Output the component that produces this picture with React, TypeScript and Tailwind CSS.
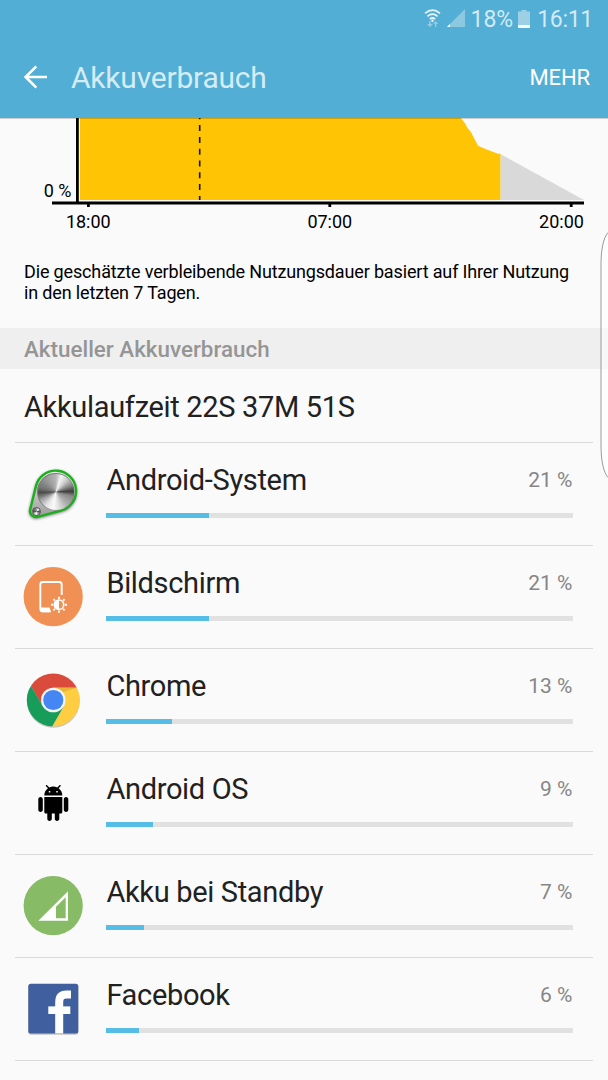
import React from "react";

interface UsageItem {
  name: string;
  percent: number;
  fill: number;
  icon: React.ReactElement;
}

const SystemIcon = () => (
  <div className="relative size-[60px]">
    <svg width="60" height="60" viewBox="0 0 60 60" overflow="visible">
      <defs>
        <filter id="soft" x="-20%" y="-20%" width="140%" height="140%">
          <feGaussianBlur stdDeviation="1.5" />
        </filter>
        <linearGradient id="plate" x1="0" y1="0" x2="0" y2="1">
          <stop offset="0" stopColor="#ececec" />
          <stop offset="1" stopColor="#9c9c9c" />
        </linearGradient>
      </defs>
      <path
        d="M13 23.1A20.3 20.3 0 1 1 37.9 47.6L14.5 53.8A6 6 0 0 1 7.2 46.5Z"
        fill="#555"
        stroke="#555"
        strokeWidth="2"
        filter="url(#soft)"
        opacity="0.8"
      />
      <path
        d="M13 22.1A20.3 20.3 0 1 1 37.9 46.6L14.5 52.8A6 6 0 0 1 7.2 45.5Z"
        fill="url(#plate)"
        stroke="#19b01b"
        strokeWidth="2.4"
      />
      <circle cx="32.7" cy="27.7" r="18.8" fill="#7c7c7c" />
    </svg>
    <div className="absolute left-[14.5px] top-[9.5px] size-[36px] rounded-full bg-[conic-gradient(#b5b5b5_0deg,#f4f4f4_18deg,#d0d0d0_40deg,#8c8c8c_65deg,#3e3e3e_88deg,#8a8a8a_105deg,#b0b0b0_140deg,#d8d8d8_165deg,#fafafa_190deg,#e4e4e4_215deg,#a8a8a8_240deg,#4c4c4c_268deg,#747474_285deg,#9a9a9a_325deg,#b5b5b5_360deg)]" />
    <div className="absolute left-[8.5px] top-[42.5px] size-[9px] rounded-full border border-[#555] bg-[conic-gradient(#999,#fff_40deg,#555_90deg,#aaa_140deg,#fff_200deg,#555_270deg,#999)]" />
  </div>
);

const DisplayIcon = () => (
  <svg width="60" height="60" viewBox="0 0 60 60">
    <circle cx="30.2" cy="29.7" r="29.6" fill="#f09054" />
    <g fill="none" stroke="#fff" strokeWidth="1.9">
      <path d="M38.7 28V17.5a2.5 2.5 0 0 0-2.5-2.5H19.8a2.5 2.5 0 0 0-2.5 2.5v24.3a2.5 2.5 0 0 0 2.5 2.5h7" />
      <circle cx="36" cy="37.7" r="4.7" strokeWidth="1.6" />
      <path d="M36 29.7v2.2M36 43.5v2.2M28 37.7h2.2M41.8 37.7h2.2M30.4 32.1l1.5 1.5M40.1 41.8l1.5 1.5M41.6 32.1l-1.5 1.5M31.9 41.8l-1.5 1.5" />
    </g>
    <path d="M17 40.6h9.4l1.8 4.6H19a2 2 0 0 1-2-2Z" fill="#fff" />
    <path d="M36 33a4.7 4.7 0 0 0 0 9.4Z" fill="#fff" />
  </svg>
);

const ChromeIcon = () => (
  <svg width="60" height="60" viewBox="0 0 60 60">
    <defs>
      <clipPath id="disc">
        <circle cx="0" cy="0" r="26.5" />
      </clipPath>
    </defs>
    <circle cx="30.3" cy="31.2" r="26.5" fill="#c4c4c4" />
    <g transform="translate(30.3 30)">
      <g clipPath="url(#disc)">
        <path d="M-27 -27H27V-12.3H0L-10.6 6.1L-22.3 -14L-30 -14Z" fill="#db4b3c" />
        <path d="M0 -12.3H30V30H-3.2L10.6 6.1Z" fill="#ffcd42" />
        <path d="M-22.3 -14L-10.6 6.1L0 12.3L10.6 6.1L-3.2 30H-30V-14Z" fill="#179c5a" />
        <path d="M0 -12.3H23L10 -8Z" fill="#d9a52e" opacity="0.6" />
      </g>
      <circle r="12.3" fill="#f4f4f4" />
      <circle r="10.1" fill="#4486f4" />
    </g>
  </svg>
);

const AndroidIcon = () => (
  <svg width="60" height="60" viewBox="0 0 60 60">
    <path
      transform="translate(12.3 12) scale(1.5)"
      d="M6 18c0 .55.45 1 1 1h1v3.5c0 .83.67 1.5 1.5 1.5s1.5-.67 1.5-1.5V19h2v3.5c0 .83.67 1.5 1.5 1.5s1.5-.67 1.5-1.5V19h1c.55 0 1-.45 1-1V8H6v10zM3.5 8C2.67 8 2 8.67 2 9.5v7c0 .83.67 1.5 1.5 1.5S5 17.33 5 16.5v-7C5 8.67 4.33 8 3.5 8zm17 0c-.83 0-1.5.67-1.5 1.5v7c0 .83.67 1.5 1.5 1.5s1.5-.67 1.5-1.5v-7c0-.83-.67-1.5-1.5-1.5zm-4.97-5.84l1.3-1.3c.2-.2.2-.51 0-.71-.2-.2-.51-.2-.71 0l-1.48 1.48C13.85 1.23 12.95 1 12 1c-.96 0-1.86.23-2.66.63L7.85.15c-.2-.2-.51-.2-.71 0-.2.2-.2.51 0 .71l1.31 1.31C6.97 3.26 6 5.01 6 7h12c0-1.99-.97-3.75-2.47-4.84zM10 5H9V4h1v1zm5 0h-1V4h1v1z"
    />
  </svg>
);

const StandbyIcon = () => (
  <svg width="60" height="60" viewBox="0 0 60 60">
    <circle cx="30.2" cy="29.7" r="29.6" fill="#87bb66" />
    <path
      fillRule="evenodd"
      fill="#fff"
      d="M15.3 44.7L45 15.3V44.7ZM33 30.7V42.3H42.7V21.3Z"
    />
  </svg>
);

const FacebookIcon = () => (
  <svg width="60" height="60" viewBox="0 0 60 60">
    <rect x="5.3" y="5.7" width="50" height="50" rx="2.5" fill="#c4c4c4" />
    <rect x="5.3" y="4.8" width="50" height="49.7" rx="2.5" fill="#405f9f" />
    <g fill="none" stroke="#fff">
      <path d="M36.2 54.4V23.2Q36.2 15.5 43.5 15.5H48" strokeWidth="8" />
      <path d="M25.3 31.2H47.3" strokeWidth="7.6" />
    </g>
  </svg>
);

const items: UsageItem[] = [
  { name: "Android-System", percent: 21, fill: 22, icon: <SystemIcon /> },
  { name: "Bildschirm", percent: 21, fill: 22, icon: <DisplayIcon /> },
  { name: "Chrome", percent: 13, fill: 14, icon: <ChromeIcon /> },
  { name: "Android OS", percent: 9, fill: 10, icon: <AndroidIcon /> },
  { name: "Akku bei Standby", percent: 7, fill: 8, icon: <StandbyIcon /> },
  { name: "Facebook", percent: 6, fill: 7, icon: <FacebookIcon /> },
];

const StatusBar = () => (
  <div className="flex h-[38px] items-center justify-end pr-[15px] text-[23px] leading-none text-[#d3eaf4]">
    <svg width="42" height="22" viewBox="0 0 42 22" className="mr-[5px]">
      <g fill="none" stroke="#e6f4fa" strokeWidth="1.7">
        <path d="M1 5.3Q8.5 -1.1 16 5.3" />
        <path d="M3.4 8.3Q8.5 3.9 13.6 8.3" />
        <path d="M5.8 11.1Q8.5 8.9 11.2 11.1" />
      </g>
      <circle cx="8.5" cy="12.7" r="1.2" fill="#e6f4fa" />
      <path d="M3 16h2.2v-3h1.6v3H9L6 19ZM9 16l2.7-3 2.7 3h-2v3H11v-3Z" fill="#93cbe2" />
      <path d="M23 19L41 1V19Z" fill="#8cc8e0" />
      <path d="M23 19L26 16V19Z" fill="#fff" />
    </svg>
    <span>18%</span>
    <svg width="12" height="18" viewBox="0 0 12 18" className="ml-[5px] mr-[7px]">
      <path d="M3.5 0h5v1.5H12V18H0V1.5h3.5Z" fill="#9dd0e5" />
      <path d="M0 15h12v3H0Z" fill="#f4fafc" />
    </svg>
    <span className="tracking-[-0.3px]">16:11</span>
  </div>
);

const Header = () => (
  <div className="flex h-20 items-center pl-[24px] pr-[18px]">
    <svg
      width="24"
      height="24"
      viewBox="0 0 24 24"
      fill="none"
      stroke="#fff"
      strokeWidth="2.6"
      className="-mt-[2px]"
    >
      <path d="M23 12H2M12.3 1.3L1.6 12L12.3 22.7" />
    </svg>
    <h1 className="ml-[23px] flex-1 text-[30px] leading-none tracking-[-0.22px] text-[#d6ecf5]">
      Akkuverbrauch
    </h1>
    <button className="text-[22px] leading-none tracking-[-0.1px] text-white">MEHR</button>
  </div>
);

const BatteryChart = () => (
  <svg width="608" height="122" viewBox="0 118 608 122" className="block">
    <path
      d="M80 118H460.7L465 123.3L467.3 127.7L470.7 131.7L478 145.7L487.3 149.7L498 153.7H500.7V200H80Z"
      fill="#ffc403"
    />
    <path d="M500.5 154L584 200H500.5Z" fill="#d9d9d9" />
    <path d="M199.7 113.3V200" stroke="#111" strokeWidth="1.6" strokeDasharray="6 5.8" />
    <path d="M76 118h2.8v83.5h-2.8ZM52 201.5H584v2.9H52Z" />
    <path d="M87 204h2.8v3H87ZM328.4 204h2.8v3h-2.8ZM569.8 204h2.8v3h-2.8Z" />
    <path d="M0 118.5H608" stroke="#000" strokeOpacity="0.18" />
    <g fontSize="18" fill="#000">
      <text x="43.7" y="197">0 %</text>
      <text x="88.3" y="228" textAnchor="middle">18:00</text>
      <text x="329.8" y="228" textAnchor="middle">07:00</text>
      <text x="561.5" y="228" textAnchor="middle">20:00</text>
    </g>
  </svg>
);

const UsageRow = ({ name, percent, fill, icon }: UsageItem) => (
  <div className="mx-[15px] flex h-[103px] items-center border-b border-[#dadada] pl-2 pr-[20.5px]">
    {icon}
    <div className="ml-[23.4px] flex-1 pb-[7px]">
      <div className="flex items-center justify-between">
        <span className="text-[29px] leading-[34px] tracking-[-0.33px] text-[#212121]">{name}</span>
        <span className="text-[21px] leading-[34px] text-[#868686]">{percent} %</span>
      </div>
      <div className="mt-[16px] h-[5px] bg-[#e1e1e1]">
        <div className="h-full bg-[#56bee6]" style={{ width: `${fill}%` }} />
      </div>
    </div>
  </div>
);

const EdgeHandle = () => (
  <svg
    width="8"
    height="248"
    viewBox="0 0 8 248"
    className="absolute right-0 top-[231px]"
  >
    <path
      d="M8 1.5C3.5 7 1 18 1 34V214C1 230 3.5 241 8 246.5"
      fill="#fff"
      fillOpacity="0.5"
      stroke="#9b9b9b"
    />
  </svg>
);

export default function App() {
  return (
    <div className="relative h-[1080px] w-[608px] overflow-hidden bg-[#fafafa] font-[Roboto,sans-serif]">
      <div className="bg-[#52aed4]">
        <StatusBar />
        <Header />
      </div>
      <BatteryChart />
      <p className="h-[88px] px-6 pt-[22px] text-[18px] leading-[20.5px] tracking-[-0.15px] text-black">
        Die geschätzte verbleibende Nutzungsdauer basiert auf Ihrer Nutzung
        <br />
        in den letzten 7 Tagen.
      </p>
      <div className="flex h-[41px] items-center bg-[#efefef] px-6 pt-[2px] text-[22.4px] font-medium text-[#959595]">
        Aktueller Akkuverbrauch
      </div>
      <div className="mx-[15px] flex h-[74px] items-center border-b border-[#dadada] px-[9px] pt-[5px] text-[29px] tracking-[-0.32px] text-[#212121]">
        Akkulaufzeit 22S 37M 51S
      </div>
      {items.map((item) => (
        <UsageRow key={item.name} {...item} />
      ))}
      <EdgeHandle />
    </div>
  );
}
